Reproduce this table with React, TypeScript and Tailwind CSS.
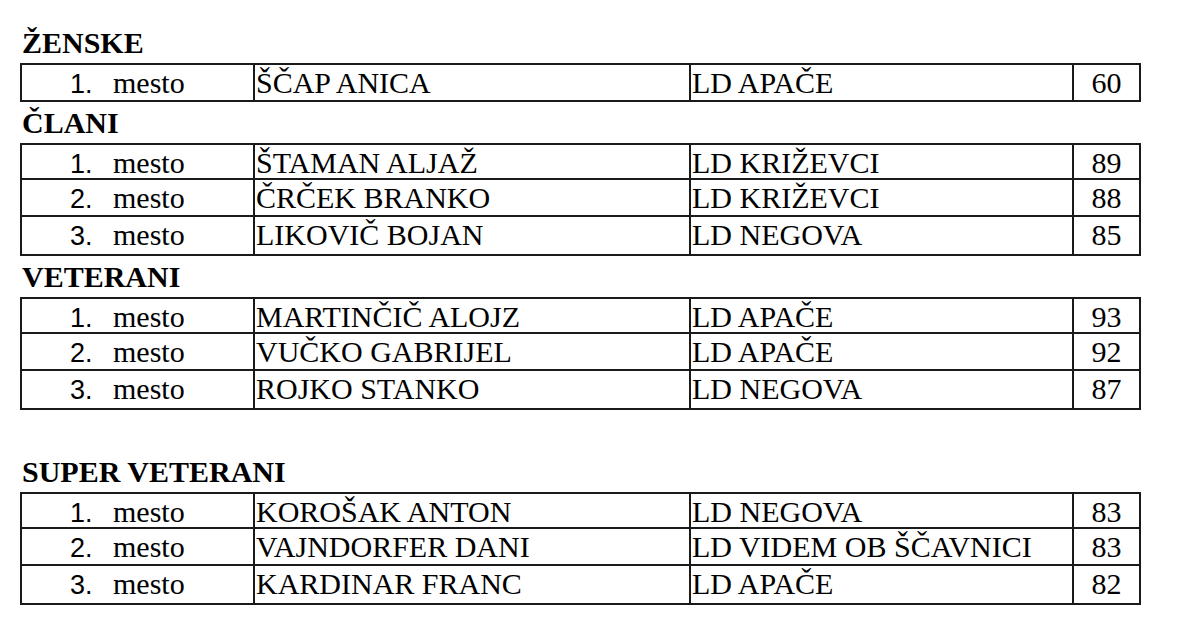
import React from "react";

type Row = [string, string, string, string];

const sections: { title: string; rows: Row[]; extraGap?: boolean }[] = [
  { title: "ŽENSKE", rows: [["1.", "ŠČAP ANICA", "LD APAČE", "60"]] },
  {
    title: "ČLANI",
    rows: [
      ["1.", "ŠTAMAN ALJAŽ", "LD KRIŽEVCI", "89"],
      ["2.", "ČRČEK BRANKO", "LD KRIŽEVCI", "88"],
      ["3.", "LIKOVIČ BOJAN", "LD NEGOVA", "85"],
    ],
  },
  {
    title: "VETERANI",
    rows: [
      ["1.", "MARTINČIČ ALOJZ", "LD APAČE", "93"],
      ["2.", "VUČKO GABRIJEL", "LD APAČE", "92"],
      ["3.", "ROJKO STANKO", "LD NEGOVA", "87"],
    ],
  },
  {
    title: "SUPER VETERANI",
    extraGap: true,
    rows: [
      ["1.", "KOROŠAK ANTON", "LD NEGOVA", "83"],
      ["2.", "VAJNDORFER DANI", "LD VIDEM OB ŠČAVNICI", "83"],
      ["3.", "KARDINAR FRANC", "LD APAČE", "82"],
    ],
  },
];

export default function App() {
  return (
    <div className="w-[1200px] h-[629px] bg-white text-black overflow-hidden pt-[22px] pl-[20px] font-['Liberation_Serif',serif]">
      {sections.map((s) => (
        <section key={s.title}>
          {s.extraGap && <div className="h-[41px]" />}
          <h2 className="h-[41px] leading-[41px] text-[30px] font-bold pl-[2px] font-['Liberation_Serif',serif]">
            {s.title}
          </h2>
          <div className="w-[1121px] border-2 border-[#1a1a1a] divide-y-2 divide-[#1a1a1a]">
            {s.rows.map((r, i) => (
              <div
                key={r[1]}
                className={
                  i === 0
                    ? "grid grid-cols-[233px_436px_383px_65px] h-[35px] leading-[35px] text-[30px] divide-x-2 divide-[#1a1a1a]"
                    : "grid grid-cols-[233px_436px_383px_65px] h-[37px] leading-[35px] text-[30px] divide-x-2 divide-[#1a1a1a]"
                }
              >
                <div className="flex items-baseline whitespace-nowrap">
                  <span className="w-[91px] pl-[48px] text-[27px] font-['Liberation_Sans',sans-serif]">
                    {r[0]}
                  </span>
                  <span className="font-['Liberation_Serif',serif]">mesto</span>
                </div>
                <div className="pl-[1px] whitespace-nowrap font-['Liberation_Serif',serif]">{r[1]}</div>
                <div className="pl-[1px] whitespace-nowrap font-['Liberation_Serif',serif]">{r[2]}</div>
                <div className="text-center font-['Liberation_Serif',serif]">{r[3]}</div>
              </div>
            ))}
          </div>
        </section>
      ))}
    </div>
  );
}
